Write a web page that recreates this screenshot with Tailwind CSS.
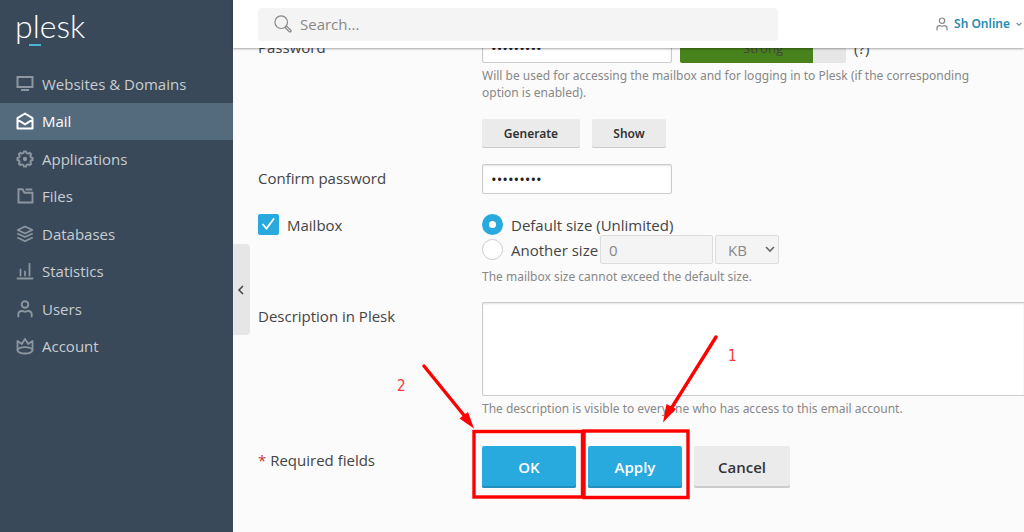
<!DOCTYPE html>
<html lang="en">
  <head>
    <meta charset="UTF-8" />
    <meta name="viewport" content="width=device-width, initial-scale=1.0" />
    <title>Plesk - Mail</title>
    <script src="https://cdn.jsdelivr.net/npm/@tailwindcss/browser@4"></script>
  </head>

  <body class="relative flex h-screen overflow-hidden bg-[#fbfbfb] font-['Open_Sans',sans-serif] text-[15px] leading-5 text-[#444]">
    <!-- Sidebar -->
    <aside class="w-[233px] shrink-0 bg-[#394959]">
      <a href="#" aria-label="plesk" class="relative block h-[65px] px-[15px] pt-2 font-['Lato',sans-serif] text-[32px] font-light leading-9 text-white">
        plesk
        <span class="absolute left-[29px] top-11 h-0.5 w-3 bg-[#4bb4d4]"></span>
      </a>
      <nav class="flex h-[300px] flex-col text-[#c8cdd1]">
        <a href="#" class="flex flex-1 items-center gap-2 px-4">
          <svg class="size-[18px] text-[#8d969e]" viewBox="0 0 18 18" fill="none" stroke="currentColor" stroke-width="2">
            <path d="M1.500 2h15v10h-15zM5 15h8" />
          </svg>
          Websites &amp; Domains
        </a>
        <a href="#" class="flex flex-1 items-center gap-2 bg-[#546a7d] px-4 text-white">
          <svg class="size-[18px]" viewBox="0 0 18 18" fill="none" stroke="currentColor" stroke-width="2" stroke-linejoin="round">
            <path d="M1.500 6.200 9 1.500l7.500 4.700v10.300h-15zM1.500 7.600 9 12.400l7.500-4.800" />
          </svg>
          Mail
        </a>
        <a href="#" class="flex flex-1 items-center gap-2 px-4">
          <svg class="size-[18px] text-[#8d969e]" viewBox="0 0 18 18" fill="none" stroke="currentColor" stroke-width="1.9" stroke-linejoin="round">
            <path d="M7.500 3 8 1.400h2L10.500 3l1.600.7 1.700-.9 1.400 1.400-.9 1.700.7 1.600 1.600.5v2l-1.600.5-.7 1.600.9 1.700-1.400 1.400-1.700-.9-1.600.7-.5 1.600H8L7.500 15l-1.600-.7-1.700.9-1.400-1.400.9-1.700L3 10.500 1.400 10V8L3 7.500l.7-1.600-.9-1.700 1.400-1.400 1.700.9z" />
            <circle cx="9" cy="9" r="1.200" fill="currentColor" />
          </svg>
          Applications
        </a>
        <a href="#" class="flex flex-1 items-center gap-2 px-4">
          <svg class="size-[18px] text-[#8d969e]" viewBox="0 0 18 18" fill="none" stroke="currentColor" stroke-width="1.900">
            <path d="M2.500 2.300h4l2 3.500h8v9.700h-14zM9.500 2.500h6.800" />
          </svg>
          Files
        </a>
        <a href="#" class="flex flex-1 items-center gap-2 px-4">
          <svg class="size-[18px] text-[#8d969e]" viewBox="0 0 18 18" fill="none" stroke="currentColor" stroke-width="1.800" stroke-linejoin="round">
            <path d="M9 1.500 16.300 5 9 8.500 1.700 5zM1.300 8.500 9 12l7.700-3.500M1.300 12.500 9 16.300l7.700-3.800" />
          </svg>
          Databases
        </a>
        <a href="#" class="flex flex-1 items-center gap-2 px-4">
          <svg class="size-[18px] text-[#8d969e]" viewBox="0 0 18 18" fill="none" stroke="currentColor" stroke-width="1.800" stroke-linecap="round">
            <path d="M1.500 16.500h15M4.500 7.500v6M9 9.500v4M13.500 2v11.500" />
          </svg>
          Statistics
        </a>
        <a href="#" class="flex flex-1 items-center gap-2 px-4">
          <svg class="size-[18px] text-[#8d969e]" viewBox="0 0 18 18" fill="none" stroke="currentColor" stroke-width="1.900" stroke-linecap="round">
            <circle cx="9" cy="4.500" r="3.300" />
            <path d="M2.300 16.500v-1.800c0-3 2-3.700 3.700-3.700 1.300 0 1.700.8 3 .8s1.700-.8 3-.8c1.700 0 3.700.7 3.700 3.700v1.800" />
          </svg>
          Users
        </a>
        <a href="#" class="flex flex-1 items-center gap-2 px-4">
          <svg class="size-[18px] text-[#8d969e]" viewBox="0 0 18 18" fill="none" stroke="currentColor" stroke-width="1.800" stroke-linejoin="round">
            <path d="M1.500 13.500V4l4.300 3L9 2l3.200 5 4.300-3v9.500" />
            <ellipse cx="9" cy="13.300" rx="7.500" ry="3.200" />
          </svg>
          Account
        </a>
      </nav>
    </aside>

    <button aria-label="Collapse sidebar" class="absolute left-[233px] top-[244px] flex h-[91px] w-[17px] items-center justify-center rounded-r bg-[#e6e6e6] pr-0.5 text-[#444]">
      <svg class="h-2.5 w-2" viewBox="0 0 8 10" fill="none" stroke="currentColor" stroke-width="1.500"><path d="M6 1 2 5l4 4" /></svg>
    </button>

    <div class="flex min-w-0 flex-1 flex-col">
      <!-- Top bar -->
      <header class="z-10 flex h-12 shrink-0 items-center justify-between bg-white pl-[25px] pr-0.5 shadow-[0_1px_2px_rgba(0,0,0,0.35)]">
        <label class="flex h-[33px] w-[520px] items-center gap-2 rounded bg-[#f4f4f4] pl-4">
          <svg class="size-[18px] text-[#888]" viewBox="0 0 18 18" fill="none" stroke="currentColor" stroke-width="1.200">
            <circle cx="7.200" cy="7.200" r="6.300" />
            <path d="m11 12.500 1.500-1.500 4.300 4.200c.8 1-.5 2.300-1.500 1.500z" />
          </svg>
          <input type="search" placeholder="Search..." aria-label="Search" class="flex-1 bg-transparent outline-none placeholder:text-[#888]" />
        </label>
        <button class="flex items-center gap-1.5 font-['Noto_Sans',sans-serif] text-xs font-semibold text-[#2a8bb0]">
          <svg class="h-3.5 w-3 text-[#888]" viewBox="0 0 12 14" fill="none" stroke="currentColor" stroke-width="1.200" stroke-linecap="round">
            <circle cx="6" cy="3.700" r="2.700" />
            <path d="M1 13v-1.600c0-2 1.400-2.700 2.700-2.700 1 0 1.300.5 2.300.5s1.300-.5 2.300-.5c1.300 0 2.700.7 2.700 2.700V13" />
          </svg>
          Sh Online
          <svg class="h-1.5 w-1.5 text-[#888]" viewBox="0 0 6 6" fill="none" stroke="currentColor" stroke-width="1.200"><path d="m.6 2 2.400 2.200L5.400 2" /></svg>
        </button>
      </header>

      <!-- Mailbox form, scrolled under the top bar -->
      <form class="-mt-[15px] grid grid-cols-[224px_minmax(0,1fr)] pl-[25px]">
        <label for="password" class="pt-1">Password</label>
        <div>
          <div class="flex items-center gap-2">
            <input id="password" type="password" value="password1" class="h-[30px] w-[190px] rounded-xs border border-[#ccc] bg-white px-2 text-[#222] shadow-[inset_0_1px_2px_rgba(0,0,0,0.12)]" />
            <div class="relative h-[30px] w-[166px] overflow-hidden rounded-xs bg-[#e6e6e6] text-center text-[13px] leading-[30px]">
              <div class="absolute inset-y-0 left-0 w-4/5 bg-[#48821c]"></div>
              <span class="relative">Strong</span>
            </div>
            <span>(?)</span>
          </div>
          <p class="mt-1 max-w-[520px] font-['Noto_Sans',sans-serif] text-xs leading-[17px] text-[#888]">Will be used for accessing the mailbox and for logging in to Plesk (if the corresponding option is enabled).</p>
          <div class="mt-[18px] flex gap-3 font-['Noto_Sans',sans-serif]">
            <button type="button" class="h-[29px] w-[98px] rounded-xs bg-[#ebebeb] text-xs font-semibold text-[#333] shadow-[inset_0_-1px_0_#ccc]">Generate</button>
            <button type="button" class="h-[29px] w-[74px] rounded-xs bg-[#ebebeb] text-xs font-semibold text-[#333] shadow-[inset_0_-1px_0_#ccc]">Show</button>
          </div>
        </div>

        <label for="confirm" class="mt-4 pt-1">Confirm password</label>
        <div class="mt-4">
          <input id="confirm" type="password" value="password1" class="block h-[30px] w-[190px] rounded-xs border border-[#ccc] bg-white px-2 text-[#222] shadow-[inset_0_1px_2px_rgba(0,0,0,0.12)]" />
        </div>

        <div class="mt-5">
          <label class="flex items-center gap-2">
            <span class="relative size-[21px]">
              <input type="checkbox" checked class="block size-full appearance-none rounded-xs border border-[#ccc] bg-white checked:border-[#28aade] checked:bg-[#28aade]" />
              <svg class="pointer-events-none absolute inset-0 text-white" viewBox="0 0 21 21" fill="none" stroke="currentColor" stroke-width="1.800"><path d="m4.500 10 4 4.500 7.500-10" /></svg>
            </span>
            Mailbox
          </label>
        </div>
        <div class="mt-5">
          <label class="flex h-[21px] items-center gap-2">
            <input type="radio" name="size" checked class="size-[21px] appearance-none rounded-full border border-[#ccc] bg-white checked:border-[7px] checked:border-[#28aade]" />
            Default size (Unlimited)
          </label>
          <div class="flex h-[29px] items-center gap-0.5">
            <label class="flex items-center gap-2">
              <input type="radio" name="size" class="size-[21px] appearance-none rounded-full border border-[#ccc] bg-white checked:border-[7px] checked:border-[#28aade]" />
              Another size
            </label>
            <input type="text" value="0" disabled aria-label="Mailbox size" class="h-[29px] w-[113px] rounded-xs border border-[#ddd] bg-[#f4f4f4] px-2 text-[#888]" />
            <span class="relative">
              <select disabled aria-label="Size unit" class="block h-[29px] w-16 appearance-none rounded-xs border border-[#ddd] bg-[#f4f4f4] px-3 text-[#888]">
                <option>KB</option>
                <option>MB</option>
                <option>GB</option>
              </select>
              <svg class="pointer-events-none absolute right-1 top-2.5 h-2 w-2.5 text-[#666]" viewBox="0 0 10 8" fill="none" stroke="currentColor" stroke-width="1.600"><path d="m1 2 4 4 4-4" /></svg>
            </span>
          </div>
          <p class="mt-1 font-['Noto_Sans',sans-serif] text-xs leading-[17px] text-[#888]">The mailbox size cannot exceed the default size.</p>
        </div>

        <label for="description" class="mt-[17px] pt-1">Description in Plesk</label>
        <div class="mt-[17px]">
          <textarea id="description" class="block h-[94px] w-full resize-none rounded-l-xs border border-r-0 border-[#ccc] bg-white p-2 shadow-[inset_0_1px_2px_rgba(0,0,0,0.12)]"></textarea>
          <p class="mt-1 font-['Noto_Sans',sans-serif] text-xs leading-[17px] text-[#888]">The description is visible to everyone who has access to this email account.</p>
        </div>

        <div class="mt-[29px] pt-1"><span class="text-[#c33]">*</span> Required fields</div>
        <div class="mt-[29px] flex gap-3">
          <button type="submit" class="h-[42px] w-[94px] rounded-xs bg-[#28aade] font-semibold text-white shadow-[inset_0_-2px_0_#2190bd]">OK</button>
          <button type="button" class="h-[42px] w-[94px] rounded-xs bg-[#28aade] font-semibold text-white shadow-[inset_0_-2px_0_#2190bd]">Apply</button>
          <button type="button" class="h-[42px] w-24 rounded-xs bg-[#ebebeb] font-semibold text-[#333] shadow-[inset_0_-2px_0_#ccc]">Cancel</button>
        </div>
      </form>
    </div>

    <!-- Step markers drawn over the form -->
    <svg class="pointer-events-none absolute left-0 top-0 z-20 h-[532px] w-[1024px] font-['DejaVu_Sans_Condensed','DejaVu_Sans',sans-serif]" viewBox="0 0 1024 532" fill="none" stroke="#f00" stroke-width="3.400">
      <rect x="474" y="431.500" width="108.500" height="65.500" />
      <rect x="584" y="431" width="104" height="66.500" />
      <path d="M424 366l43 53M716 337l-47 75" stroke-linecap="round" />
      <path d="M474 428.500 459.500 418.500 468 412zM663 422.500l3.500-18.500 9.500 5z" fill="#f00" stroke="none" />
      <text x="397" y="391" fill="#f33" stroke="none" font-size="15">2</text>
      <text x="728" y="361" fill="#f33" stroke="none" font-size="15">1</text>
    </svg>
  </body>
</html>
